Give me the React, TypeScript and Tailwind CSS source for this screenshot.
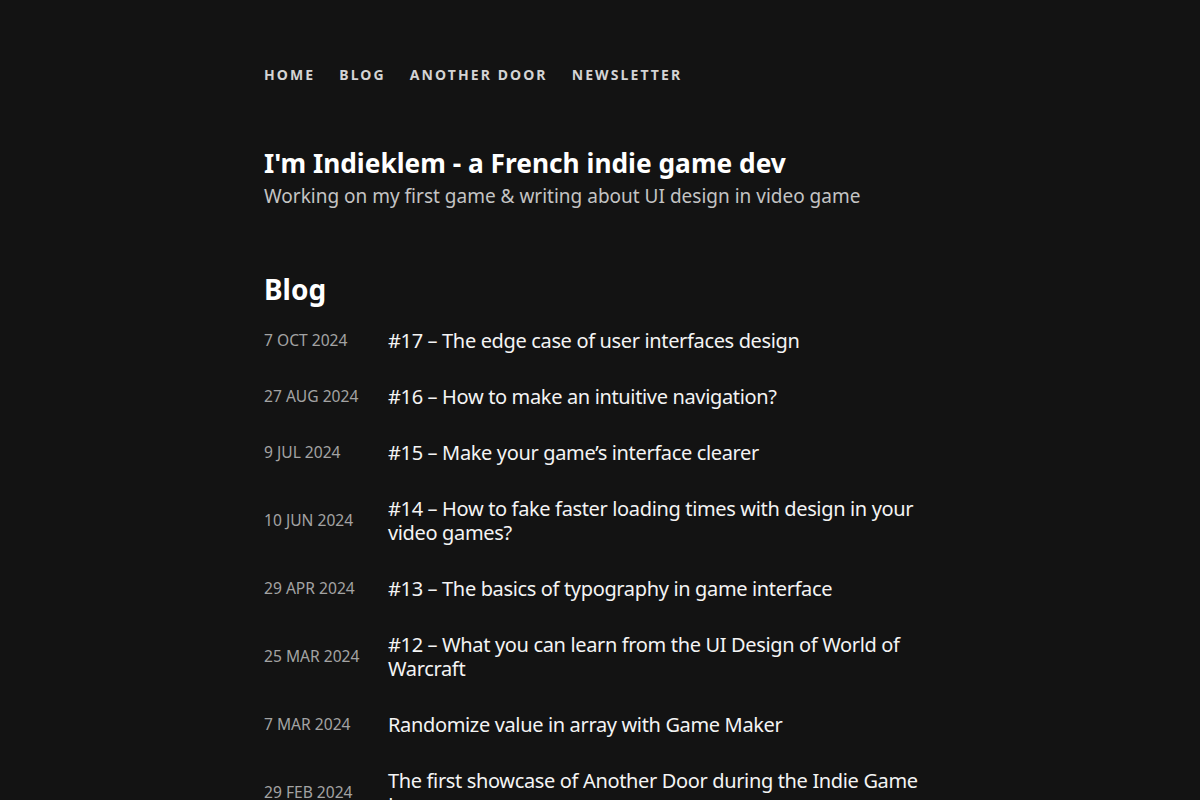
import React from "react";

const posts: { date: string; title: string }[] = [
  { date: "7 OCT 2024", title: "#17 – The edge case of user interfaces design" },
  { date: "27 AUG 2024", title: "#16 – How to make an intuitive navigation?" },
  { date: "9 JUL 2024", title: "#15 – Make your game’s interface clearer" },
  { date: "10 JUN 2024", title: "#14 – How to fake faster loading times with design in your video games?" },
  { date: "29 APR 2024", title: "#13 – The basics of typography in game interface" },
  { date: "25 MAR 2024", title: "#12 – What you can learn from the UI Design of World of Warcraft" },
  { date: "7 MAR 2024", title: "Randomize value in array with Game Maker" },
  { date: "29 FEB 2024", title: "The first showcase of Another Door during the Indie Game Lyon" },
];

export default function App() {
  return (
    <div
      className="min-h-screen bg-[#131313] text-[#f2f2f2]"
      style={{ fontFamily: '"Noto Sans", "Open Sans", sans-serif' }}
    >
      <div className="mx-auto w-[672px] pt-[64px]">
        <nav className="flex gap-[24px] text-[14px] font-bold tracking-[0.15em] text-[#d4d4d4] leading-[22px]">
          <a href="#">HOME</a>
          <a href="#">BLOG</a>
          <a href="#">ANOTHER DOOR</a>
          <a href="#">NEWSLETTER</a>
        </nav>

        <header className="mt-[59px]">
          <h1 className="text-[26.3px] font-bold leading-[36px] text-white">
            I'm Indieklem - a French indie game dev
          </h1>
          <p className="text-[19px] leading-[30px] text-[#c4c4c4]">
            Working on my first game &amp; writing about UI design in video game
          </p>
        </header>

        <section className="mt-[60px]">
          <h2 className="text-[28px] font-bold leading-[36px] text-white">Blog</h2>
          <ul className="mt-[22px] flex flex-col gap-[32px]">
            {posts.map((p) => (
              <li key={p.date} className="flex items-center">
                <span className="w-[124px] shrink-0 text-[15.6px] text-[#a3a3a3]">{p.date}</span>
                <a href="#" className="text-[20px] leading-[24px] tracking-[-0.35px] text-[#f4f4f4]">
                  {p.title}
                </a>
              </li>
            ))}
          </ul>
        </section>
      </div>
    </div>
  );
}
